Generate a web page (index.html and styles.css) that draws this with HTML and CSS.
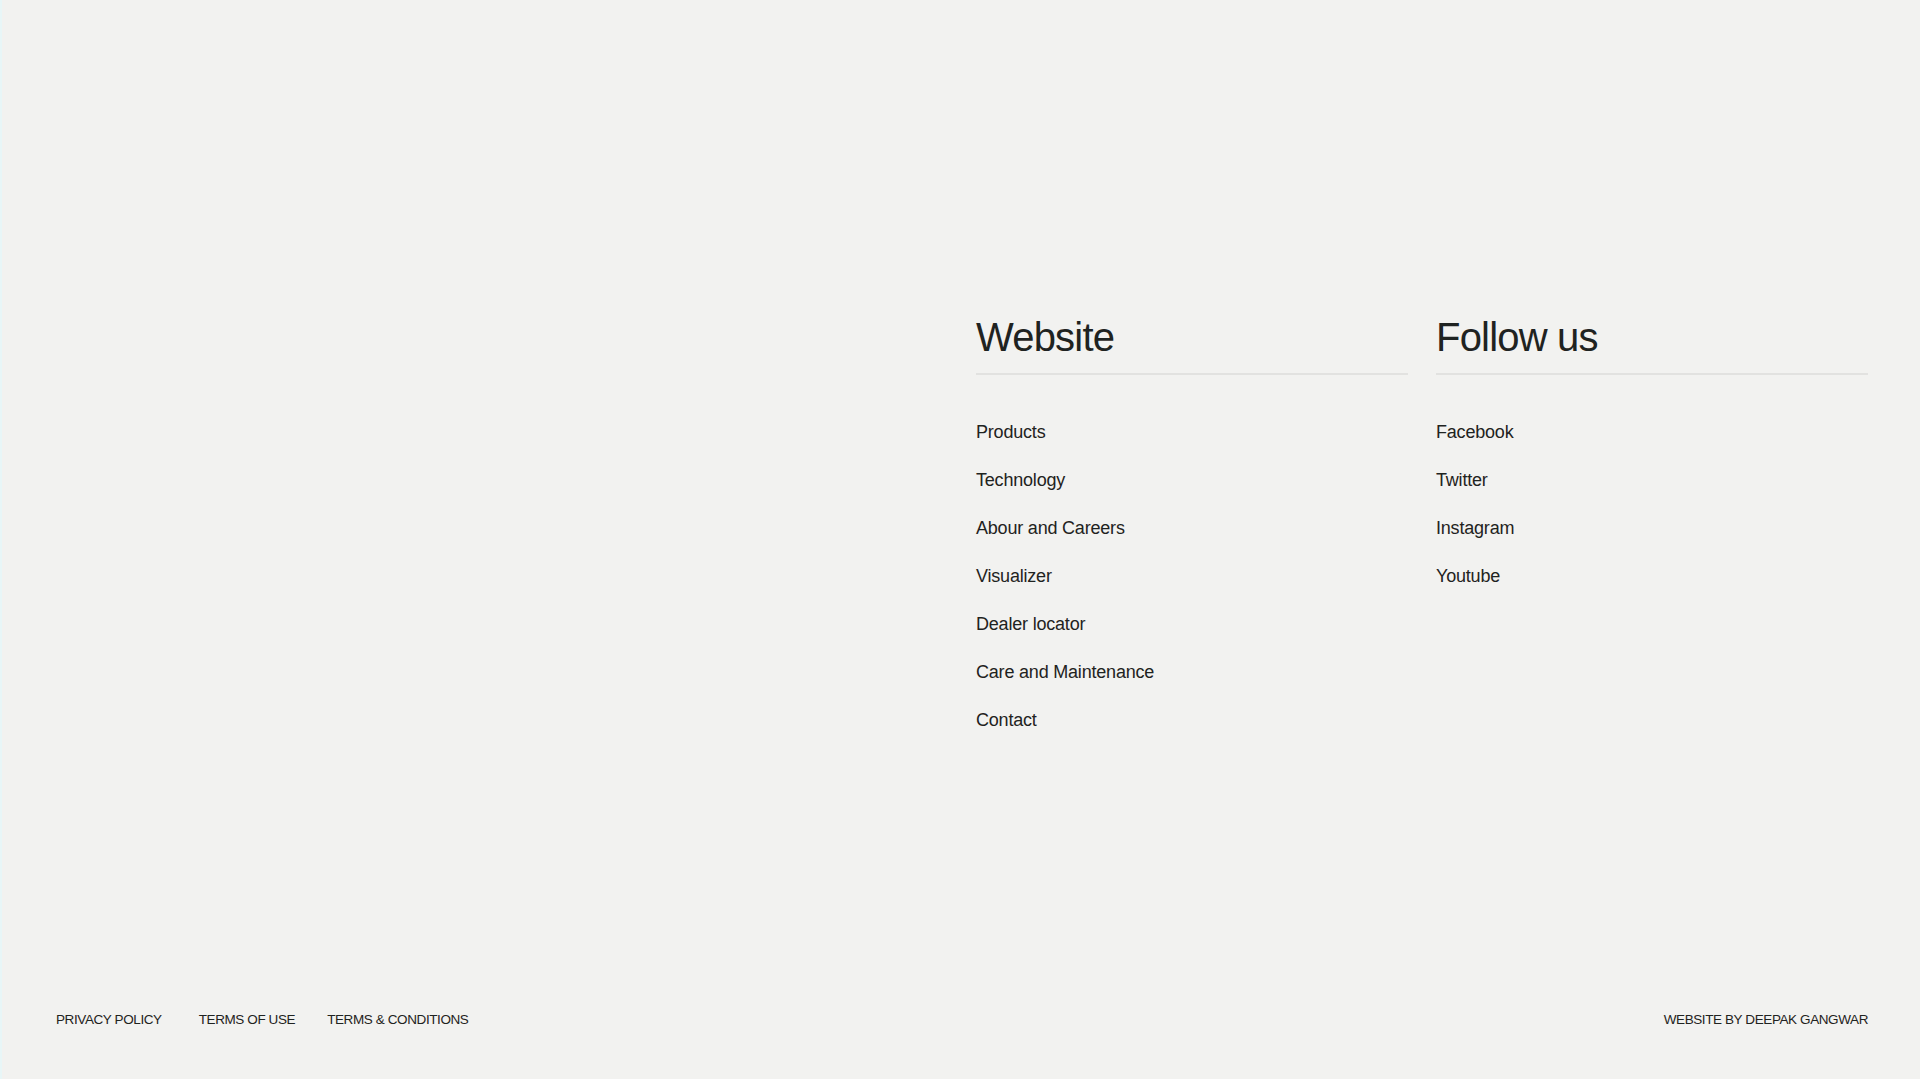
FILE: index.html
```html
<!DOCTYPE html>
<html lang="en">
<head>
<meta charset="utf-8">
<title>Footer</title>
<link rel="stylesheet" href="styles.css">
</head>
<body>
<main class="main">
  <div class="cols">
    <section class="col">
      <h2 class="col-title">Website</h2>
      <ul class="links">
        <li><a href="#">Products</a></li>
        <li><a href="#">Technology</a></li>
        <li><a href="#">Abour and Careers</a></li>
        <li><a href="#">Visualizer</a></li>
        <li><a href="#">Dealer locator</a></li>
        <li><a href="#">Care and Maintenance</a></li>
        <li><a href="#">Contact</a></li>
      </ul>
    </section>
    <section class="col">
      <h2 class="col-title">Follow us</h2>
      <ul class="links">
        <li><a href="#">Facebook</a></li>
        <li><a href="#">Twitter</a></li>
        <li><a href="#">Instagram</a></li>
        <li><a href="#">Youtube</a></li>
      </ul>
    </section>
  </div>
</main>
<footer class="footer">
  <nav class="legal">
    <a href="#" class="legal-first">PRIVACY POLICY</a>
    <a href="#">TERMS OF USE</a>
    <a href="#">TERMS &amp; CONDITIONS</a>
  </nav>
  <a href="#" class="credit">WEBSITE BY DEEPAK GANGWAR</a>
</footer>
</body>
</html>
```
FILE: styles.css
```css
* { box-sizing: border-box; }
html, body { margin: 0; padding: 0; }
body {
  min-height: 100vh;
  display: flex;
  flex-direction: column;
  background: #f2f2f0;
  color: #1f2321;
  font-family: "Liberation Sans", Arial, sans-serif;
  border-left: 2px solid #e8f6f7;
}
a { color: inherit; text-decoration: none; }
.main {
  display: flex;
  justify-content: flex-end;
  padding: 313px 52px 0 0;
}
.cols {
  width: 892px;
  display: grid;
  grid-template-columns: 432px 432px;
  column-gap: 28px;
}
.col-title {
  margin: 0;
  font-size: 40px;
  line-height: 48px;
  font-weight: 400;
  letter-spacing: -0.8px;
  padding-bottom: 12px;
  border-bottom: 2px solid #e2e2e0;
}
.links {
  list-style: none;
  margin: 45px 0 0;
  padding: 0;
  display: flex;
  flex-direction: column;
  gap: 24px;
  font-size: 18px;
  line-height: 24px;
  letter-spacing: -0.2px;
}
.footer {
  margin-top: auto;
  display: flex;
  justify-content: space-between;
  align-items: center;
  padding: 0 52px 49px 54px;
  font-size: 13.5px;
  line-height: 20px;
  letter-spacing: -0.4px;
}
.legal {
  display: flex;
  gap: 32px;
}
.legal-first { margin-right: 5px; }
```
